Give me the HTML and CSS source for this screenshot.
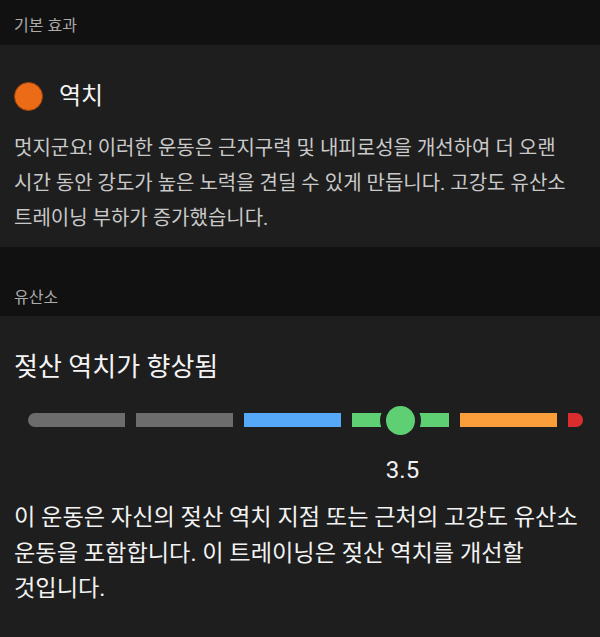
FILE: index.html
```html
<!DOCTYPE html>
<html lang="ko">
<head>
<meta charset="utf-8">
<link rel="stylesheet" href="styles.css">
</head>
<body>
<div class="page">
  <div class="group-header first">기본 효과</div>
  <section class="card">
    <div class="effect-title">
      <span class="dot"></span>
      <span class="effect-name">역치</span>
    </div>
    <p class="effect-text">멋지군요! 이러한 운동은 근지구력 및 내피로성을 개선하여 더 오랜 시간 동안 강도가 높은 노력을 견딜 수 있게 만듭니다. 고강도 유산소 트레이닝 부하가 증가했습니다.</p>
  </section>
  <div class="group-header second">유산소</div>
  <section class="card card-fill">
    <h2 class="benefit-title">젖산 역치가 향상됨</h2>
    <div class="scale">
      <span class="seg seg-gray seg-start"></span>
      <span class="seg seg-gray"></span>
      <span class="seg seg-blue"></span>
      <span class="seg seg-green"><span class="marker"></span></span>
      <span class="seg seg-orange"></span>
      <span class="seg seg-red seg-end"></span>
      <span class="scale-value">3.5</span>
    </div>
    <p class="benefit-text">이 운동은 자신의 젖산 역치 지점 또는 근처의 고강도 유산소 운동을 포함합니다. 이 트레이닝은 젖산 역치를 개선할 것입니다.</p>
  </section>
</div>
</body>
</html>
```
FILE: styles.css
```css
* { box-sizing: border-box; }
html, body {
  margin: 0;
  padding: 0;
  background: #1e1e1e;
}
body {
  width: 600px;
  height: 637px;
  overflow: hidden;
  font-family: Roboto, "Noto Sans CJK KR", sans-serif;
  color: #f0f0f0;
  word-break: keep-all;
}
.page {
  display: flex;
  flex-direction: column;
  min-height: 637px;
}
.group-header {
  background: #111111;
  color: #ababab;
  font-size: 16px;
  line-height: 20px;
  padding: 0 14px;
}
.group-header.first {
  padding-top: 15.5px;
  padding-bottom: 9.5px;
}
.group-header.second {
  padding-top: 40.5px;
  padding-bottom: 8.5px;
}
.card {
  background: #1e1e1e;
  padding: 36px 14px 11.5px;
}
.card-fill {
  flex: 1;
}
.effect-title {
  display: flex;
  align-items: center;
  height: 30px;
  gap: 16px;
}
.dot {
  width: 29px;
  height: 29px;
  border-radius: 50%;
  background: #ec6b16;
  border: 1px solid #9c430c;
  flex: none;
}
.effect-name {
  font-size: 24px;
  line-height: 30px;
  color: #f4f4f4;
}
.effect-text {
  margin: 19.5px 0 0;
  font-size: 20px;
  line-height: 35px;
  color: #c9c9c9;
}
.benefit-title {
  margin: 0;
  font-weight: normal;
  font-size: 26px;
  line-height: 30px;
  color: #f4f4f4;
}
.scale {
  display: grid;
  grid-template-columns: repeat(5, 97px) 15px;
  column-gap: 11px;
  row-gap: 28.5px;
  margin: 31px 0 0 14px;
}
.seg {
  height: 14px;
  display: block;
}
.seg-gray { background: #6c6c6c; }
.seg-blue { background: #55a9f6; }
.seg-green {
  background: #5fcf74;
  position: relative;
}
.seg-orange { background: #fa9e3c; }
.seg-red { background: #db2d2d; }
.seg-start { border-radius: 7px 0 0 7px; }
.seg-end { border-radius: 0 7px 7px 0; }
.marker {
  position: absolute;
  left: 50%;
  top: 50%;
  width: 29px;
  height: 29px;
  margin: -14.5px 0 0 -14.5px;
  border-radius: 50%;
  background: #5fcf74;
  box-shadow: 0 0 0 6px #1e1e1e;
}
.scale-value {
  grid-column: 4;
  grid-row: 2;
  text-align: center;
  font-size: 24px;
  line-height: 28px;
  color: #f2f2f2;
  padding-left: 4px;
}
.benefit-text {
  margin: 16.5px 0 0;
  font-size: 23.2px;
  line-height: 35.5px;
  color: #f2f2f2;
}
```
